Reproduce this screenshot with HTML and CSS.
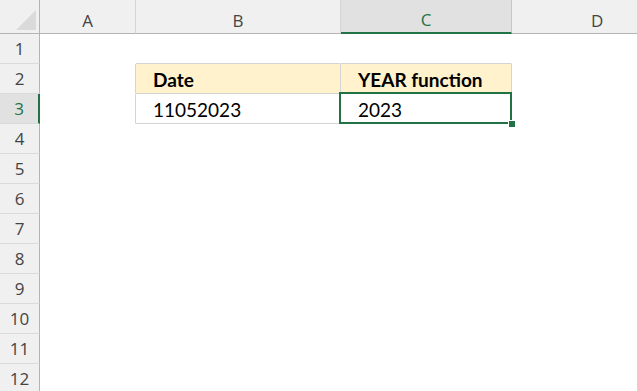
FILE: index.html
```html
<!DOCTYPE html>
<html lang="en">
<head>
    <meta charset="UTF-8">
    <title>YEAR function</title>
    <link rel="stylesheet" href="styles.css">
</head>
<body>

<div class="sheet">
    <!-- column headers -->
    <div class="corner"><span class="tri"></span></div>
    <div class="col-head">A</div>
    <div class="col-head">B</div>
    <div class="col-head active">C</div>
    <div class="col-head last">D</div>

    <!-- row 1 -->
    <div class="row-head">1</div>
    <div class="cell"></div>
    <div class="cell edge-b"></div>
    <div class="cell edge-b"></div>
    <div class="cell"></div>

    <!-- row 2 -->
    <div class="row-head">2</div>
    <div class="cell edge-r"></div>
    <div class="cell tbl head">Date</div>
    <div class="cell tbl head">YEAR function</div>
    <div class="cell"></div>

    <!-- row 3 -->
    <div class="row-head active">3</div>
    <div class="cell edge-r"></div>
    <div class="cell tbl">11052023</div>
    <div class="cell tbl selected">2023</div>
    <div class="cell"></div>

    <div class="row-head">4</div><div class="cell"></div><div class="cell"></div><div class="cell"></div><div class="cell"></div>
    <div class="row-head">5</div><div class="cell"></div><div class="cell"></div><div class="cell"></div><div class="cell"></div>
    <div class="row-head">6</div><div class="cell"></div><div class="cell"></div><div class="cell"></div><div class="cell"></div>
    <div class="row-head">7</div><div class="cell"></div><div class="cell"></div><div class="cell"></div><div class="cell"></div>
    <div class="row-head">8</div><div class="cell"></div><div class="cell"></div><div class="cell"></div><div class="cell"></div>
    <div class="row-head">9</div><div class="cell"></div><div class="cell"></div><div class="cell"></div><div class="cell"></div>
    <div class="row-head">10</div><div class="cell"></div><div class="cell"></div><div class="cell"></div><div class="cell"></div>
    <div class="row-head">11</div><div class="cell"></div><div class="cell"></div><div class="cell"></div><div class="cell"></div>
    <div class="row-head">12</div><div class="cell"></div><div class="cell"></div><div class="cell"></div><div class="cell"></div>
</div>

</body>
</html>
```

FILE: styles.css
```css
body {
    margin: 0;
    padding: 0;
    background: #ffffff;
    overflow: hidden;
}
.sheet {
    display: grid;
    grid-template-columns: 40px 96px 205px 171px 125px;
    grid-template-rows: 34px;
    grid-auto-rows: 30px;
    height: 391px;
    overflow: hidden;
    font-family: Lato, "Liberation Sans", sans-serif;
}
.sheet > div {
    box-sizing: border-box;
}
.corner {
    position: relative;
    background: #f0f0f0;
    border-right: 1px solid #b4b4b4;
    border-bottom: 1px solid #b4b4b4;
}
.corner .tri {
    position: absolute;
    right: 3px;
    bottom: 3px;
    width: 0;
    height: 0;
    border-left: 20px solid transparent;
    border-bottom: 20px solid #dadada;
}
.col-head {
    background: #f0f0f0;
    border-right: 1px solid #d4d4d4;
    border-bottom: 1px solid #b4b4b4;
    color: #444444;
    font-family: "Open Sans", "Noto Sans", sans-serif;
    font-size: 17px;
    display: flex;
    align-items: center;
    justify-content: center;
    padding-top: 7px;
}
.col-head.active {
    background: #e1e1e1;
    color: #217346;
    border-right-color: #c6c6c6;
    border-bottom: 2px solid #217346;
}
.col-head.last {
    justify-content: flex-start;
    padding-left: 79px;
    border-right: none;
}
.row-head {
    background: #f0f0f0;
    border-right: 1px solid #b4b4b4;
    border-bottom: 1px solid #dadada;
    color: #444444;
    font-family: "Open Sans", "Noto Sans", sans-serif;
    font-size: 17px;
    display: flex;
    align-items: center;
    justify-content: center;
}
.row-head.active {
    background: #e1e1e1;
    color: #217346;
    border-right: 2px solid #217346;
}
.cell {
    border-right: 1px solid transparent;
    border-bottom: 1px solid transparent;
    font-size: 19px;
    color: #000000;
    display: flex;
    align-items: center;
    padding-left: 17px;
    padding-top: 1px;
}
.edge-r {
    border-right-color: #d4d4d4;
}
.edge-b {
    border-bottom-color: #d4d4d4;
}
.tbl {
    border-right-color: #d4d4d4;
    border-bottom-color: #d4d4d4;
}
.tbl.head {
    background: #fff2cc;
    font-weight: bold;
}
.selected {
    position: relative;
}
.selected::after {
    content: "";
    position: absolute;
    left: -2px;
    top: -2px;
    right: -1px;
    bottom: -1px;
    border: 2px solid #217346;
}
.selected::before {
    content: "";
    position: absolute;
    right: -4px;
    bottom: -4px;
    width: 6px;
    height: 6px;
    background: #217346;
    border-left: 1px solid #ffffff;
    border-top: 1px solid #ffffff;
    z-index: 2;
}
```
